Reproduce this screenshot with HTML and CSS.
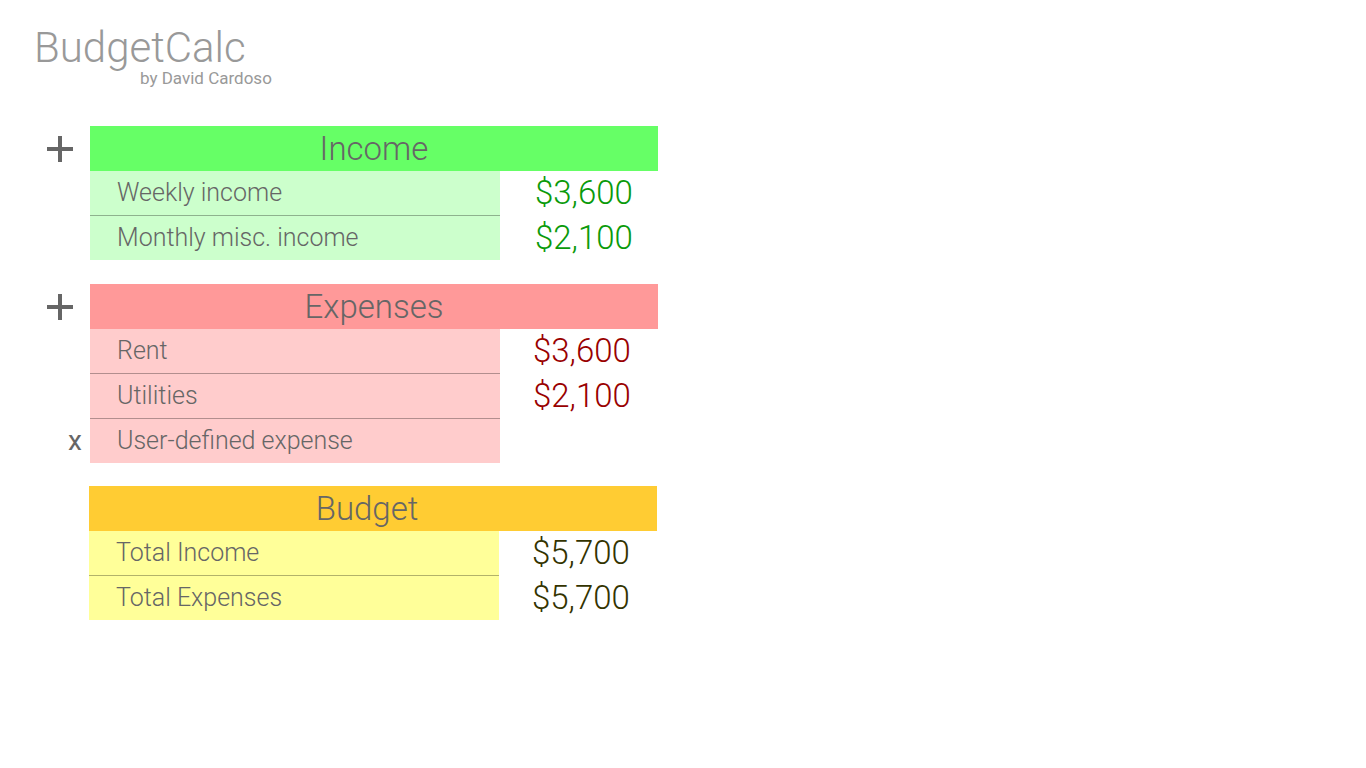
FILE: index.html
```html
<!DOCTYPE html>
<html lang="en">
<head>
<meta charset="utf-8">
<title>BudgetCalc</title>
<link rel="stylesheet" href="styles.css">
</head>
<body>
<header class="brand">
  <h1 class="brand-title">BudgetCalc</h1>
  <p class="brand-author">by David Cardoso</p>
</header>

<main class="sheet">
  <section class="block block-income">
    <button class="add" aria-label="Add income">
      <svg width="26" height="26" viewBox="0 0 26 26"><rect x="11" y="0" width="4" height="26" fill="#666"/><rect x="0" y="11" width="26" height="4" fill="#666"/></svg>
    </button>
    <h2 class="block-head">Income</h2>
    <div class="label">Weekly income</div>
    <div class="value">$3,600</div>
    <div class="label sep">Monthly misc. income</div>
    <div class="value">$2,100</div>
  </section>

  <section class="block block-expense">
    <button class="add" aria-label="Add expense">
      <svg width="26" height="26" viewBox="0 0 26 26"><rect x="11" y="0" width="4" height="26" fill="#666"/><rect x="0" y="11" width="26" height="4" fill="#666"/></svg>
    </button>
    <h2 class="block-head">Expenses</h2>
    <div class="label">Rent</div>
    <div class="value">$3,600</div>
    <div class="label sep">Utilities</div>
    <div class="value">$2,100</div>
    <button class="remove" aria-label="Remove expense">x</button>
    <div class="label sep">User-defined expense</div>
    <div class="value"></div>
  </section>

  <section class="block block-budget">
    <h2 class="block-head">Budget</h2>
    <div class="label">Total Income</div>
    <div class="value">$5,700</div>
    <div class="label sep">Total Expenses</div>
    <div class="value">$5,700</div>
  </section>
</main>
</body>
</html>
```

FILE: styles.css
```css
html, body {
  margin: 0;
  padding: 0;
  background: #ffffff;
  font-family: Roboto, "Liberation Sans", sans-serif;
}

.brand {
  padding: 26px 0 0 34px;
}

.brand-title {
  margin: 0;
  font-size: 42px;
  font-weight: 300;
  line-height: 44px;
  color: #999999;
}

.brand-author {
  margin: 0 0 0 106px;
  font-size: 17px;
  font-weight: 400;
  line-height: 16px;
  color: #999999;
}

.sheet {
  display: flex;
  flex-direction: column;
  gap: 23px;
  margin-top: 40px;
}

.block {
  display: grid;
  grid-template-columns: 90px 410px 158px;
  grid-auto-rows: auto;
}

.block-head {
  grid-column: 2 / 4;
  margin: 0;
  height: 45px;
  line-height: 45px;
  text-align: center;
  font-size: 33px;
  font-weight: 300;
  color: #666666;
}

.add {
  grid-column: 1;
  justify-self: end;
  align-self: center;
  margin: 0 17px 0 0;
  padding: 0;
  border: 0;
  background: none;
  width: 26px;
  height: 26px;
  display: flex;
}

.remove {
  grid-column: 1;
  justify-self: end;
  align-self: center;
  margin: 0 8px 0 0;
  padding: 0;
  border: 0;
  background: none;
  font-family: Roboto, "Liberation Sans", sans-serif;
  font-size: 28px;
  font-weight: 400;
  line-height: 40px;
  color: #666666;
}

.label {
  grid-column: 2;
  height: 44px;
  line-height: 44px;
  padding-left: 27px;
  font-size: 25px;
  font-weight: 300;
  color: #666666;
}

.label.sep {
  border-top: 1px solid rgba(0, 0, 0, 0.3);
}

.value {
  grid-column: 3;
  align-self: center;
  padding-left: 33px;
  font-size: 33px;
  font-weight: 300;
  line-height: 40px;
}

.block-income .block-head { background: #66ff66; }
.block-income .label { background: #ccffcc; }
.block-income .value { color: #0a9a0a; padding-left: 35px; }

.block-expense { margin-top: 1px; }
.block-expense .block-head { background: #ff9999; }
.block-expense .label { background: #ffcccc; }
.block-expense .value { color: #990000; }

.block-budget { margin-left: -1px; }
.block-budget .block-head { background: #ffcc33; padding-right: 12px; }
.block-budget .label { background: #ffff99; }
.block-budget .value { color: #333300; }
```
